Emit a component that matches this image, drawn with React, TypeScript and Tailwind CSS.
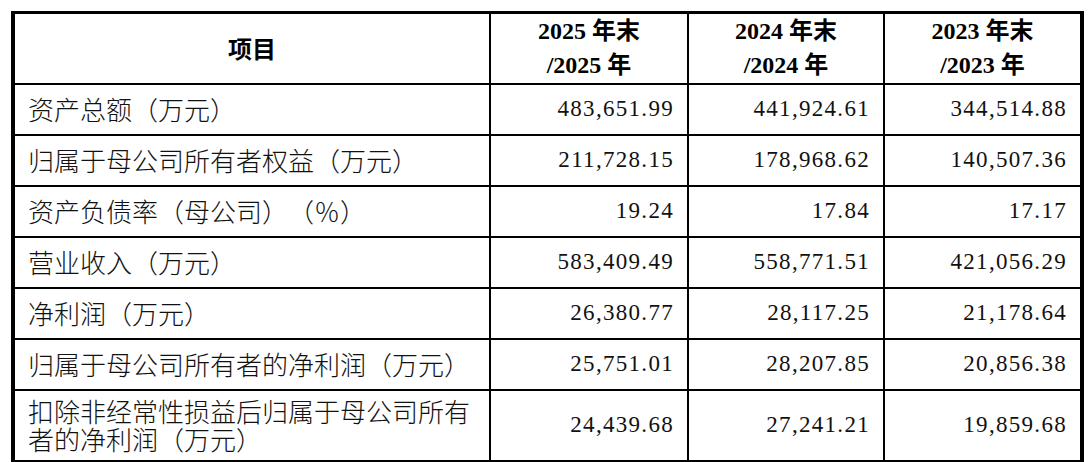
const rows: { label: React.ReactNode; values: string[]; tall?: boolean }[] = [
  { label: '资产总额（万元）', values: ['483,651.99', '441,924.61', '344,514.88'] },
  { label: '归属于母公司所有者权益（万元）', values: ['211,728.15', '178,968.62', '140,507.36'] },
  { label: '资产负债率（母公司）（％）', values: ['19.24', '17.84', '17.17'] },
  { label: '营业收入（万元）', values: ['583,409.49', '558,771.51', '421,056.29'] },
  { label: '净利润（万元）', values: ['26,380.77', '28,117.25', '21,178.64'] },
  { label: '归属于母公司所有者的净利润（万元）', values: ['25,751.01', '28,207.85', '20,856.38'] },
  {
    label: (
      <>
        <span className="block">扣除非经常性损益后归属于母公司所有</span>
        <span className="block">者的净利润（万元）</span>
      </>
    ),
    values: ['24,439.68', '27,241.21', '19,859.68'],
    tall: true,
  },
];

const years = ['2025', '2024', '2023'];

const cjk = "font-['Noto_Sans_CJK_SC',sans-serif] [text-spacing-trim:space-all]";
const num = "font-['Liberation_Serif','Noto_Sans_CJK_SC',serif]";

export default function App() {
  return (
    <div className="h-[462px] w-[1092px] overflow-hidden bg-white pl-[11px] pt-[11px]">
      <table className="w-[1069px] table-fixed border-collapse border-l-4 border-r-4 border-t-[3px] border-black text-[#111]">
        <colgroup>
          <col className="w-[477px]" />
          <col className="w-[198px]" />
          <col className="w-[196px]" />
          <col className="w-[198px]" />
        </colgroup>
        <thead>
          <tr className="h-[71px]">
            <th className={`border-2 border-black text-center text-[24px] font-bold text-black ${cjk}`}>
              项目
            </th>
            {years.map((y) => (
              <th
                key={y}
                className={`border-2 border-black text-center text-[24px] font-bold leading-[34px] text-black ${num}`}
              >
                {y} 年末
                <br />/{y} 年
              </th>
            ))}
          </tr>
        </thead>
        <tbody>
          {rows.map((row, i) => (
            <tr key={i} className={row.tall ? 'h-[71px]' : 'h-[51px]'}>
              <td className={`border-2 border-black pl-[13px] pr-2 text-left text-[26px] font-light leading-[28px] ${cjk}`}>
                {row.label}
              </td>
              {row.values.map((v, j) => (
                <td
                  key={j}
                  className={`border-2 border-black pr-[13px] text-right text-[23px] tracking-[1.3px] ${num}`}
                >
                  {v}
                </td>
              ))}
            </tr>
          ))}
          <tr className="h-[51px]">
            <td className="border-2 border-black" />
            <td className="border-2 border-black" />
            <td className="border-2 border-black" />
            <td className="border-2 border-black" />
          </tr>
        </tbody>
      </table>
    </div>
  );
}
